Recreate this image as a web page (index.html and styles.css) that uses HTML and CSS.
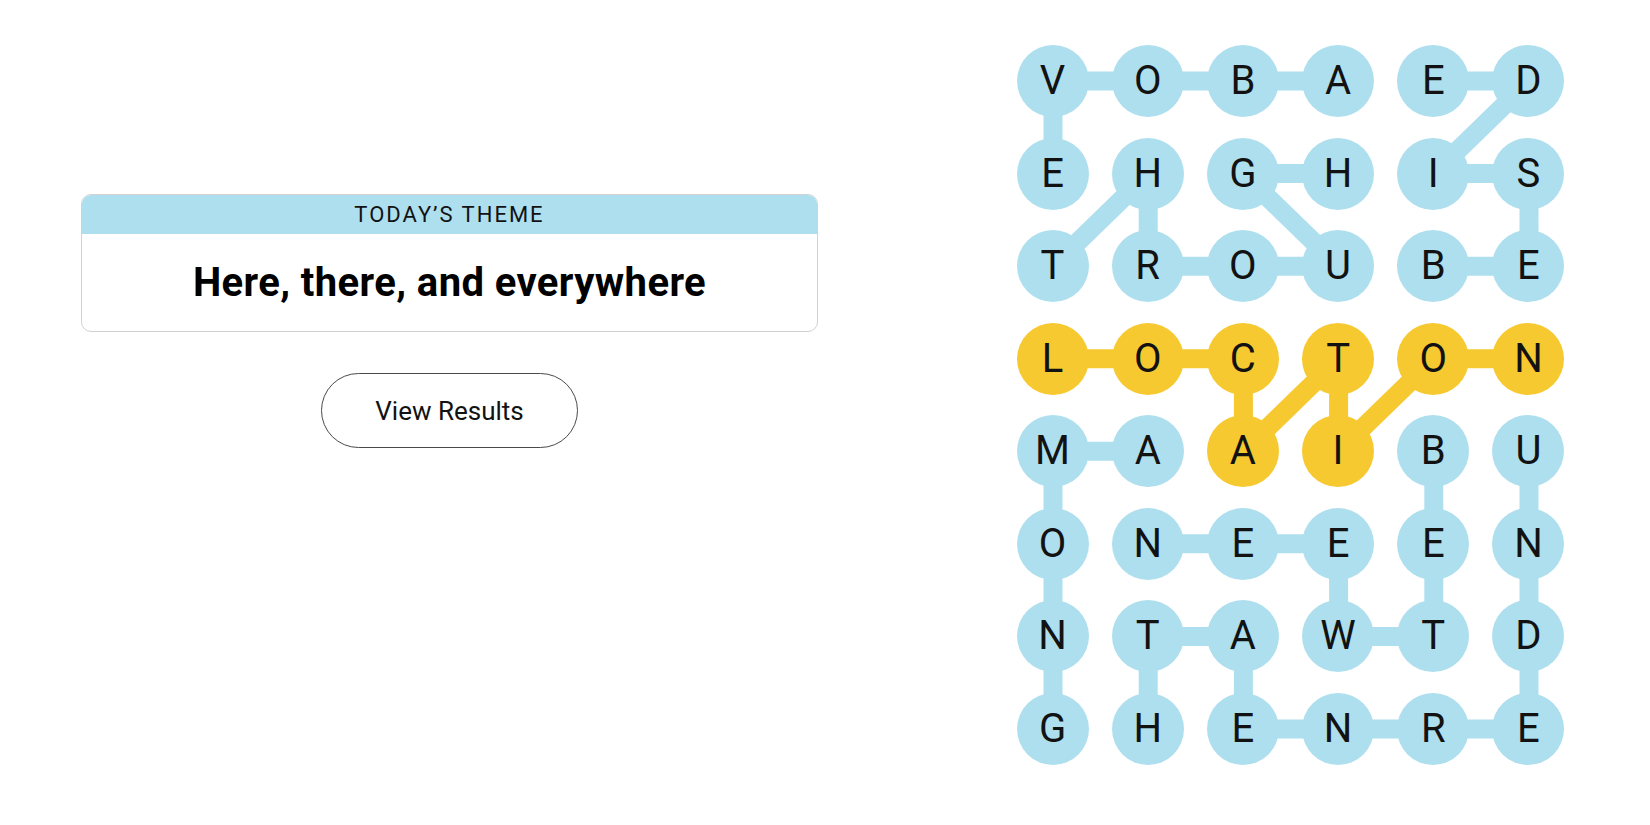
FILE: index.html
```html
<!DOCTYPE html>
<html lang="en">
<head>
<meta charset="utf-8">
<title>Strands</title>
<link rel="stylesheet" href="styles.css">
</head>
<body>
<main class="page">
  <section class="info">
    <div class="theme-card">
      <h2 class="theme-label">Today’s Theme</h2>
      <div class="theme-body">
        <h1 class="theme-title">Here, there, and everywhere</h1>
      </div>
    </div>
    <button class="results-btn" type="button">View Results</button>
  </section>

  <section class="board">
    <svg class="board-lines" viewBox="0 0 548 720" width="548" height="720" aria-hidden="true">
      <g class="line-found" fill="none">
        <polyline points="321.6,36 226.4,36 131.2,36 36,36 36,128.57"/>
        <polyline points="36,221.14 131.2,128.57 131.2,221.14 226.4,221.14 321.6,221.14 226.4,128.57 321.6,128.57"/>
        <polyline points="416.8,221.14 512,221.14 512,128.57 416.8,128.57 512,36 416.8,36"/>
        <polyline points="131.2,406.28 36,406.28 36,498.85 36,591.42 36,684"/>
        <polyline points="416.8,406.28 416.8,498.85 416.8,591.42 321.6,591.42 321.6,498.85 226.4,498.85 131.2,498.85"/>
        <polyline points="512,406.28 512,498.85 512,591.42 512,684 416.8,684 321.6,684 226.4,684 226.4,591.42 131.2,591.42 131.2,684"/>
      </g>
      <g class="line-spangram" fill="none">
        <polyline points="36,313.71 131.2,313.71 226.4,313.71 226.4,406.28 321.6,313.71 321.6,406.28 416.8,313.71 512,313.71"/>
      </g>
    </svg>
    <div class="grid">
      <button class="cell found">V</button>
      <button class="cell found">O</button>
      <button class="cell found">B</button>
      <button class="cell found">A</button>
      <button class="cell found">E</button>
      <button class="cell found">D</button>

      <button class="cell found">E</button>
      <button class="cell found">H</button>
      <button class="cell found">G</button>
      <button class="cell found">H</button>
      <button class="cell found">I</button>
      <button class="cell found">S</button>

      <button class="cell found">T</button>
      <button class="cell found">R</button>
      <button class="cell found">O</button>
      <button class="cell found">U</button>
      <button class="cell found">B</button>
      <button class="cell found">E</button>

      <button class="cell spangram">L</button>
      <button class="cell spangram">O</button>
      <button class="cell spangram">C</button>
      <button class="cell spangram">T</button>
      <button class="cell spangram">O</button>
      <button class="cell spangram">N</button>

      <button class="cell found">M</button>
      <button class="cell found">A</button>
      <button class="cell spangram">A</button>
      <button class="cell spangram">I</button>
      <button class="cell found">B</button>
      <button class="cell found">U</button>

      <button class="cell found">O</button>
      <button class="cell found">N</button>
      <button class="cell found">E</button>
      <button class="cell found">E</button>
      <button class="cell found">E</button>
      <button class="cell found">N</button>

      <button class="cell found">N</button>
      <button class="cell found">T</button>
      <button class="cell found">A</button>
      <button class="cell found">W</button>
      <button class="cell found">T</button>
      <button class="cell found">D</button>

      <button class="cell found">G</button>
      <button class="cell found">H</button>
      <button class="cell found">E</button>
      <button class="cell found">N</button>
      <button class="cell found">R</button>
      <button class="cell found">E</button>
    </div>
  </section>
</main>
</body>
</html>
```

FILE: styles.css
```css
* {
  box-sizing: border-box;
}

html, body {
  margin: 0;
  padding: 0;
  background: #ffffff;
}

body {
  font-family: Roboto, "Liberation Sans", Arial, sans-serif;
  color: #121212;
}

.page {
  display: flex;
  align-items: flex-start;
  gap: 198.5px;
  padding: 45px 0 0 81px;
  width: 1650px;
  height: 825px;
}

.info {
  width: 737px;
  margin-top: 149px;
  display: flex;
  flex-direction: column;
  align-items: center;
  gap: 41px;
}

.theme-card {
  width: 100%;
  height: 138px;
  border: 1px solid #d2d2d2;
  border-radius: 10px;
  overflow: hidden;
  display: flex;
  flex-direction: column;
}

.theme-label {
  margin: 0;
  height: 39px;
  background: #aedfee;
  display: flex;
  align-items: center;
  justify-content: center;
  font-size: 22px;
  font-weight: 400;
  letter-spacing: 2px;
  text-transform: uppercase;
  color: #121212;
}

.theme-body {
  flex: 1;
  display: flex;
  align-items: center;
  justify-content: center;
}

.theme-title {
  margin: 0;
  font-size: 40px;
  font-weight: 700;
  letter-spacing: 0.4px;
  color: #000000;
}

.results-btn {
  width: 257px;
  height: 75px;
  border: 1px solid #4a4a4a;
  border-radius: 38px;
  background: #ffffff;
  font-family: Roboto, "Liberation Sans", Arial, sans-serif;
  font-size: 26px;
  color: #121212;
  padding: 0;
}

.board {
  position: relative;
  width: 548px;
  height: 720px;
}

.board-lines {
  position: absolute;
  left: 0;
  top: 0;
}

.line-found polyline {
  stroke: #aedfee;
  stroke-width: 19;
  stroke-linejoin: round;
}

.line-spangram polyline {
  stroke: #f7c930;
  stroke-width: 19;
  stroke-linejoin: round;
}

.grid {
  position: relative;
  display: grid;
  grid-template-columns: repeat(6, 72px);
  grid-auto-rows: 72px;
  column-gap: 23.2px;
  row-gap: 20.57px;
}

.cell {
  width: 72px;
  height: 72px;
  border: none;
  border-radius: 50%;
  padding: 0;
  display: flex;
  align-items: center;
  justify-content: center;
  font-family: Roboto, "Liberation Sans", Arial, sans-serif;
  font-size: 40px;
  font-weight: 400;
  color: #121212;
  line-height: 1;
}

.cell.found {
  background: #aedfee;
}

.cell.spangram {
  background: #f7c930;
}
```
